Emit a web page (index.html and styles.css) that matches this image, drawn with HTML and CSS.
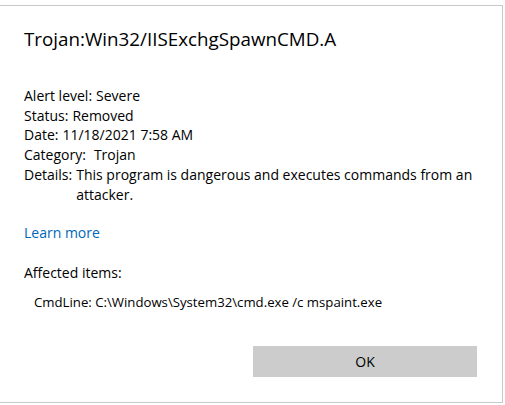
FILE: index.html
```html
<!DOCTYPE html>
<html>
<head>
<meta charset="utf-8">
<link rel="stylesheet" href="styles.css">
</head>
<body>
<div class="dialog">
  <h1 class="title">Trojan:Win32/IISExchgSpawnCMD.A</h1>
  <div class="info">
    <div class="row"><span>Alert level:</span><span>Severe</span></div>
    <div class="row"><span>Status:</span><span>Removed</span></div>
    <div class="row"><span>Date:</span><span>11/18/2021 7:58 AM</span></div>
    <div class="row wide"><span>Category:</span><span>Trojan</span></div>
    <div class="row"><span>Details:</span><span>This program is dangerous and executes commands from an attacker.</span></div>
  </div>
  <a class="link" href="#">Learn more</a>
  <div class="affected">Affected items:</div>
  <div class="item">CmdLine: C:\Windows\System32\cmd.exe /c mspaint.exe</div>
  <div class="actions"><button class="ok">OK</button></div>
</div>
</body>
</html>
```
FILE: styles.css
```css
html, body {
  margin: 0;
  padding: 0;
  background: #ffffff;
}
body {
  font-family: "Open Sans", "Noto Sans", sans-serif;
  color: #000000;
}
.dialog {
  margin-top: 5px;
  border: 1px solid #c8c8c8;
  border-left: none;
  padding: 0 0 0 24px;
  box-sizing: border-box;
  width: 503px;
  height: 398px;
}
.title {
  margin: 0;
  padding-top: 20px;
  font-size: 18.8px;
  font-weight: 400;
  line-height: 26px;
}
.info {
  margin-top: 34px;
  font-size: 14px;
  line-height: 19.7px;
}
.row {
  display: flex;
  gap: 4px;
  padding-right: 20px;
}
.row.wide {
  gap: 8px;
}
.link {
  display: block;
  margin-top: 19px;
  font-size: 14px;
  line-height: 20px;
  color: #0067b8;
  text-decoration: none;
  width: max-content;
}
.affected {
  margin-top: 20px;
  font-size: 14px;
  line-height: 20px;
}
.item {
  margin-top: 9px;
  padding-left: 10px;
  font-size: 13.2px;
  line-height: 20px;
}
.actions {
  display: flex;
  justify-content: flex-end;
  padding-right: 25px;
  margin-top: 34px;
}
.ok {
  width: 224px;
  height: 31px;
  border: none;
  background: #cccccc;
  font-family: "Open Sans", "Noto Sans", sans-serif;
  font-size: 14px;
  color: #000;
  padding: 0;
}
```
